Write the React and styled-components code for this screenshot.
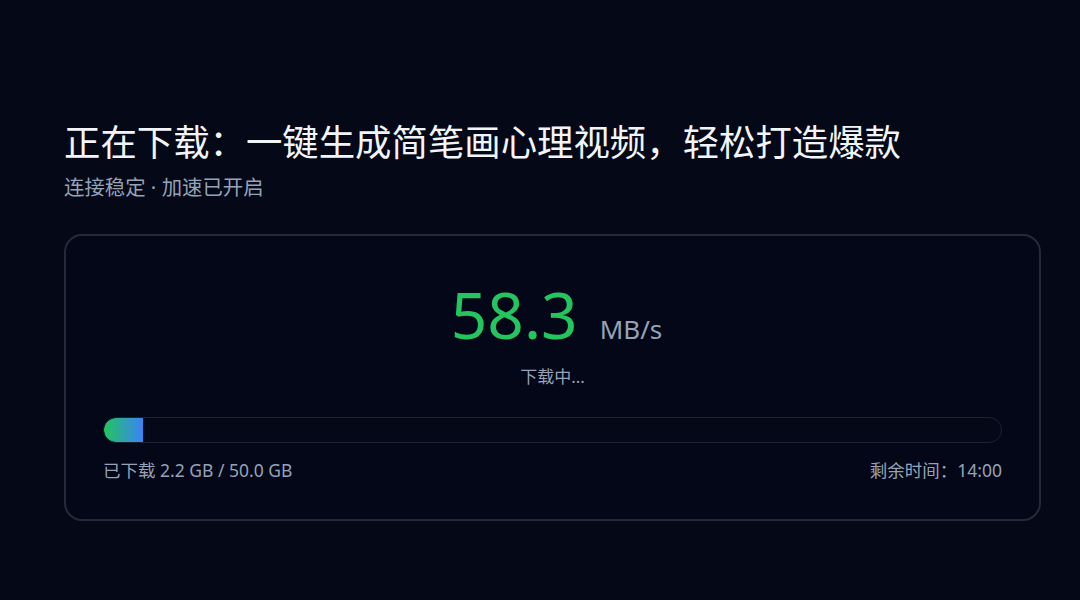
import React from 'react';
import styled, { createGlobalStyle } from 'styled-components';

const GlobalStyle = createGlobalStyle`
  html, body {
    margin: 0;
    padding: 0;
    background: #050816;
  }
  body {
    font-family: "Noto Sans", "Noto Sans CJK SC", sans-serif;
  }
`;

const Page = styled.div`
  width: 1080px;
  height: 600px;
  box-sizing: border-box;
  padding: 117px 39px 0 64px;
  background: #050816;
  display: flex;
  flex-direction: column;
`;

const Title = styled.h1`
  margin: 0;
  font-size: 36.4px;
  font-weight: 400;
  line-height: 50px;
  color: #f1f5f9;
`;

const Subtitle = styled.p`
  margin: 7px 0 0;
  font-size: 20.4px;
  line-height: 26px;
  color: #94a3b8;
`;

const Card = styled.section`
  margin-top: 34px;
  border: 2px solid #232a38;
  border-radius: 18px;
  background: #040717;
  padding: 43px 37px 36px;
  display: flex;
  flex-direction: column;
`;

const SpeedRow = styled.div`
  display: flex;
  align-items: baseline;
  justify-content: center;
  gap: 22px;
  margin-left: 8px;
`;

const SpeedValue = styled.span`
  font-size: 64px;
  line-height: 72px;
  color: #22c55e;
  font-weight: 400;
`;

const SpeedUnit = styled.span`
  font-size: 26px;
  color: #94a3b8;
`;

const Status = styled.div`
  margin-top: 14px;
  text-align: center;
  font-size: 17px;
  line-height: 24px;
  color: #94a3b8;
`;

const Track = styled.div`
  margin-top: 28px;
  height: 24px;
  border: 1px solid #1c2231;
  border-radius: 999px;
  background: #050816;
  overflow: hidden;
`;

const Fill = styled.div`
  height: 100%;
  border-radius: 999px 0 0 999px;
  background: linear-gradient(90deg, #22c55e 0%, #3b82f6 100%);
`;

const Footer = styled.div`
  margin-top: 14px;
  display: flex;
  justify-content: space-between;
  font-size: 17.5px;
  line-height: 26px;
  color: #94a3b8;
`;

export default function App() {
  const done = 2.2;
  const total = 50.0;
  return (
    <Page>
      <GlobalStyle />
      <Title>正在下载：一键生成简笔画心理视频，轻松打造爆款</Title>
      <Subtitle>连接稳定 · 加速已开启</Subtitle>
      <Card>
        <SpeedRow>
          <SpeedValue>58.3</SpeedValue>
          <SpeedUnit>MB/s</SpeedUnit>
        </SpeedRow>
        <Status>下载中...</Status>
        <Track>
          <Fill style={{ width: `${(done / total) * 100}%` }} />
        </Track>
        <Footer>
          <span>已下载 2.2 GB / 50.0 GB</span>
          <span>剩余时间：14:00</span>
        </Footer>
      </Card>
    </Page>
  );
}
